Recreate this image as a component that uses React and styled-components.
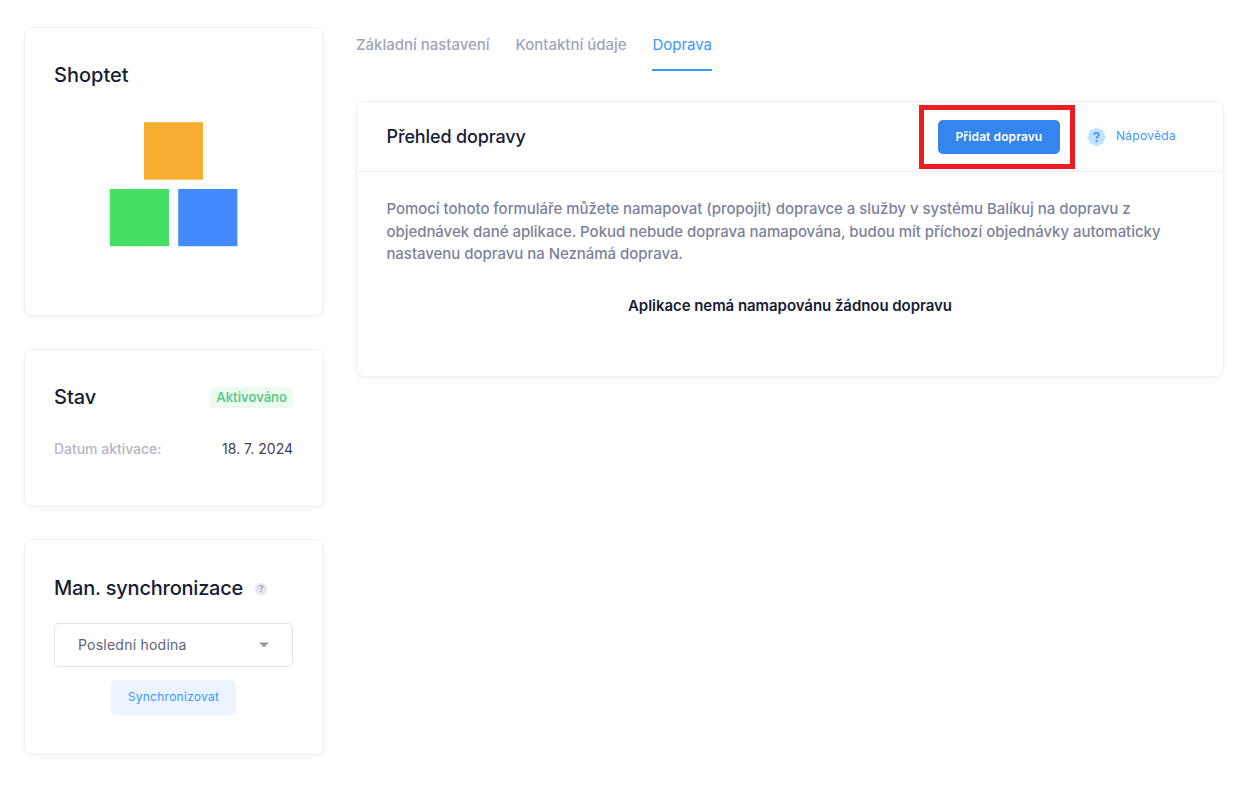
import React from "react";
import styled, { createGlobalStyle } from "styled-components";

const GlobalStyle = createGlobalStyle`
  *, *::before, *::after { box-sizing: border-box; }
  body {
    margin: 0;
    background: #fff;
    font-family: Inter, "Liberation Sans", sans-serif;
    color: #181c32;
  }
`;

const Page = styled.div`
  display: flex;
  align-items: flex-start;
  gap: 32px;
  width: 1245px;
  min-height: 807px;
  padding: 27px 21px 0 24px;
`;

const Sidebar = styled.aside`
  display: flex;
  flex-direction: column;
  flex: none;
  width: 300px;
`;

const Main = styled.main`
  flex: 1;
  min-width: 0;
`;

const Card = styled.section`
  height: ${(p) => p.$height}px;
  margin-bottom: ${(p) => p.$gap || 0}px;
  border: 1px solid #eff0f2;
  border-radius: 8px;
  background: #fff;
  box-shadow: 0 3px 4px rgba(0, 0, 0, 0.03);
`;

const SideCard = styled(Card)`
  padding: ${(p) => p.$top || 32}px 30px 0 29px;
`;

const SideTitle = styled.h2`
  margin: 0;
  font-size: 20px;
  font-weight: 500;
  line-height: 30px;
  letter-spacing: ${(p) => p.$spacing || "0"};
`;

const Logo = styled.svg`
  display: block;
  margin: 32px 0 0 55px;
`;

const Row = styled.div`
  display: flex;
  align-items: center;
  justify-content: ${(p) => (p.$start ? "flex-start" : "space-between")};
  margin-top: ${(p) => p.$top || 0}px;
`;

const Badge = styled.span`
  height: 21px;
  padding: 0 6px;
  border-radius: 5px;
  background: #edfbee;
  color: #60ca8e;
  font-size: 13px;
  font-weight: 600;
  line-height: 21px;
`;

const Meta = styled.span`
  font-size: 14px;
  font-weight: ${(p) => (p.$muted ? 500 : 400)};
  line-height: 20px;
  color: ${(p) => (p.$muted ? "#b5b5c3" : "#3f4254")};
  letter-spacing: ${(p) => (p.$muted ? "-0.03px" : "0")};
`;

const Hint = styled.span`
  width: 12px;
  height: 12px;
  margin: 2px 0 0 12px;
  border-radius: 50%;
  background: #e4e6ef;
  color: #a1a5b7;
  font-size: 9px;
  font-weight: 600;
  line-height: 12px;
  text-align: center;
`;

const Select = styled.div`
  display: flex;
  align-items: center;
  justify-content: space-between;
  height: 44px;
  margin-top: 20px;
  padding: 0 23px 1px;
  border: 1px solid #e1e2ea;
  border-radius: 5px;
  color: #5e6278;
  font-size: 14px;
  line-height: 17px;
  letter-spacing: 0.23px;
`;

const SyncButton = styled.button`
  display: block;
  width: 125px;
  height: 35px;
  margin: 13px auto 0 57px;
  padding: 0 0 2px;
  border: 0;
  border-radius: 5px;
  background: #ebf3ff;
  color: #3e97ff;
  font: 400 12px/33px Inter, sans-serif;
  letter-spacing: 0.27px;
`;

const Tabs = styled.nav`
  display: flex;
  gap: 26px;
  height: 44px;
  margin-bottom: 30px;
`;

const Tab = styled.a`
  height: 44px;
  border-bottom: 2px solid ${(p) => (p.$active ? "#3e97ff" : "transparent")};
  color: ${(p) => (p.$active ? "#3e97ff" : "#a1a5b7")};
  font-size: 15px;
  font-weight: ${(p) => (p.$active ? 400 : 500)};
  line-height: 36px;
  letter-spacing: -0.02px;
  white-space: nowrap;
`;

const CardHeader = styled.header`
  display: flex;
  align-items: center;
  height: 70px;
  padding: 0 47px 0 29px;
  border-bottom: 1px solid #eff0f2;
`;

const MainTitle = styled.h1`
  flex: 1;
  margin: 0;
  padding-left: 0.5px;
  font-size: 18px;
  font-weight: 500;
  line-height: 28px;
  letter-spacing: -0.13px;
`;

const Highlight = styled.div`
  display: flex;
  align-items: center;
  justify-content: center;
  width: 156px;
  height: 64px;
  padding-left: 4px;
  border: 5px solid #ed1c24;
  margin: 1px 12px 0 0;
`;

const PrimaryButton = styled.button`
  width: 122px;
  height: 34px;
  padding: 0;
  border: 0;
  border-radius: 5px;
  background: #3485ed;
  color: #fff;
  font: 600 12px/34px Inter, sans-serif;
  letter-spacing: 0.1px;
`;

const HelpLink = styled.a`
  display: flex;
  align-items: center;
  gap: 10px;
  color: #3e97ff;
  font-size: 12px;
  line-height: 18px;
  letter-spacing: 0.3px;
`;

const HelpLabel = styled.span`
  padding-bottom: 2px;
`;

const CardBody = styled.div`
  padding: 26px 29px 0;
`;

const Intro = styled.p`
  margin: 0;
  color: #7e8299;
  font-size: 15px;
  font-weight: 500;
  line-height: 22.5px;
  letter-spacing: -0.04px;
  padding-left: 0.4px;
  white-space: nowrap;
`;

const Empty = styled.p`
  margin: 29px 0 0;
  font-size: 15px;
  font-weight: 600;
  line-height: 22px;
  letter-spacing: -0.05px;
  text-align: center;
`;

const HelpIcon = () => (
  <svg width="19" height="20" viewBox="0 0 19 20">
    <path
      d="M9.5 .8 12.3 2.6 15.8 3.2 16.7 6.8 18.7 10 16.7 13.2 15.8 16.6 12.3 17.4 9.5 19.2 6.7 17.4 3.2 16.6 2.3 13.2 .3 10 2.3 6.8 3.2 3.2 6.7 2.6Z"
      fill="#c2e0ff"
      stroke="#c2e0ff"
      strokeWidth=".6"
      strokeLinejoin="round"
    />
    <path
      d="M7.2 7.7C7.2 5.2 11.8 5.2 11.8 7.8 11.8 9.5 9.6 9.5 9.6 11.5"
      fill="none"
      stroke="#3e97ff"
      strokeWidth="1.9"
    />
    <rect x="8.6" y="13" width="2" height="2" rx=".6" fill="#3e97ff" />
  </svg>
);

export default function App() {
  return (
    <>
      <GlobalStyle />
      <Page>
        <Sidebar>
          <SideCard $height={289} $gap={33}>
            <SideTitle>Shoptet</SideTitle>
            <Logo width="130" height="126" viewBox="0 0 130 126">
              <rect x="35" y="0.2" width="59" height="57.5" fill="#f8ae30" />
              <rect x="0.8" y="67" width="59.2" height="57.2" fill="#45e063" />
              <rect x="69.2" y="67" width="59.2" height="57.2" fill="#448aff" />
            </Logo>
          </SideCard>
          <SideCard $height={158} $gap={32}>
            <Row>
              <SideTitle>Stav</SideTitle>
              <Badge>Aktivováno</Badge>
            </Row>
            <Row $top={27}>
              <Meta $muted>Datum aktivace:</Meta>
              <Meta>18. 7. 2024</Meta>
            </Row>
          </SideCard>
          <SideCard $height={216} $top={33}>
            <Row $start>
              <SideTitle $spacing="-0.22px">Man. synchronizace</SideTitle>
              <Hint>?</Hint>
            </Row>
            <Select>
              Poslední hodina
              <svg width="10" height="6" viewBox="0 0 10 6">
                <path d="M0 0.5H10L5 5.5Z" fill="#999" />
              </svg>
            </Select>
            <SyncButton>Synchronizovat</SyncButton>
          </SideCard>
        </Sidebar>
        <Main>
          <Tabs>
            <Tab>Základní nastavení</Tab>
            <Tab>Kontaktní údaje</Tab>
            <Tab $active>Doprava</Tab>
          </Tabs>
          <Card $height={276}>
            <CardHeader>
              <MainTitle>Přehled dopravy</MainTitle>
              <Highlight>
                <PrimaryButton>Přidat dopravu</PrimaryButton>
              </Highlight>
              <HelpLink>
                <HelpIcon />
                <HelpLabel>Nápověda</HelpLabel>
              </HelpLink>
            </CardHeader>
            <CardBody>
              <Intro>
                Pomocí tohoto formuláře můžete namapovat (propojit) dopravce a služby v systému Balíkuj na dopravu z
                <br />
                objednávek dané aplikace. Pokud nebude doprava namapována, budou mít příchozí objednávky automaticky
                <br />
                nastavenu dopravu na Neznámá doprava.
              </Intro>
              <Empty>Aplikace nemá namapovánu žádnou dopravu</Empty>
            </CardBody>
          </Card>
        </Main>
      </Page>
    </>
  );
}
